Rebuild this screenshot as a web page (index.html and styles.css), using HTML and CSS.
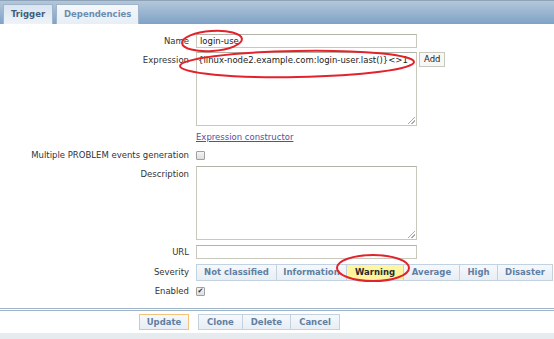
FILE: index.html
```html
<!DOCTYPE html>
<html lang="en">

<head>
    <meta charset="UTF-8">
    <title>Trigger</title>
    <link rel="stylesheet" href="styles.css">
</head>

<body>
    <div class="page">
        <div class="tab-bar">
            <a class="tab active">Trigger</a>
            <a class="tab">Dependencies</a>
        </div>

        <form class="trigger-form">
            <div class="row row-name">
                <label class="label">Name</label>
                <div class="field"><input class="text-input" type="text" value="login-use"></div>
            </div>

            <div class="row row-expression">
                <label class="label">Expression</label>
                <div class="field">
                    <div class="textarea">{linux-node2.example.com:login-user.last()}&lt;&gt;1<span class="grip"></span></div>
                    <span class="small-btn">Add</span>
                </div>
            </div>

            <div class="row row-link">
                <span class="label"></span>
                <div class="field"><a class="link">Expression constructor</a></div>
            </div>

            <div class="row row-multiple">
                <label class="label">Multiple PROBLEM events generation</label>
                <div class="field"><span class="checkbox"></span></div>
            </div>

            <div class="row row-description">
                <label class="label">Description</label>
                <div class="field"><div class="textarea"><span class="grip"></span></div></div>
            </div>

            <div class="row row-url">
                <label class="label">URL</label>
                <div class="field"><input class="text-input" type="text" value=""></div>
            </div>

            <div class="row row-severity">
                <label class="label">Severity</label>
                <div class="field severity">
                    <span class="sev sev-1">Not classified</span>
                    <span class="sev sev-2">Information</span>
                    <span class="sev sev-3 selected">Warning</span>
                    <span class="sev sev-4">Average</span>
                    <span class="sev sev-5">High</span>
                    <span class="sev sev-6">Disaster</span>
                </div>
            </div>

            <div class="row row-enabled">
                <label class="label">Enabled</label>
                <div class="field"><span class="checkbox checked">&#10004;</span></div>
            </div>
        </form>

        <div class="footer">
            <span class="btn main">Update</span>
            <div class="btn-group">
                <span class="btn">Clone</span>
                <span class="btn">Delete</span>
                <span class="btn">Cancel</span>
            </div>
        </div>
        <div class="bottom-band"></div>

        <!-- red marks drawn over the screenshot -->
        <svg class="marks" width="554" height="339" viewBox="0 0 554 339">
            <ellipse cx="212" cy="41" rx="30" ry="10" transform="rotate(-4 212 41)" />
            <ellipse cx="297" cy="64" rx="117" ry="13" transform="rotate(-1 297 64)" />
            <ellipse cx="373" cy="268" rx="36" ry="13" />
        </svg>
    </div>
</body>

</html>
```

FILE: styles.css
```css
body {
    margin: 0;
    padding: 0;
    background-color: #fff;
    font-family: "DejaVu Sans", Verdana, sans-serif;
    font-size: 8.5px;
    color: #333;
}

.page {
    position: relative;
    width: 554px;
    height: 339px;
    overflow: hidden;
}

/* tabs */
.tab-bar {
    height: 24px;
    box-sizing: border-box;
    border-top: 1px solid #8ea3b8;
    background: linear-gradient(#b4c7da, #7ea2c6);
    display: flex;
    align-items: flex-end;
    padding-left: 3px;
    gap: 3px;
}

.tab {
    height: 19px;
    line-height: 19px;
    padding: 0 7px;
    font-weight: bold;
    color: #6b8db0;
    background: linear-gradient(#f5f8fb, #e7eef5);
    border: 1px solid #9fb5cb;
    border-bottom: none;
}

.tab.active {
    width: 34px;
    color: #3f5d7c;
    background: linear-gradient(#d9e4ef, #eef3f8);
}

/* form */
.trigger-form {
    padding-top: 10px;
}

.row {
    display: flex;
    align-items: flex-start;
}

.label {
    width: 196px;
    padding-right: 7px;
    box-sizing: border-box;
    text-align: right;
    flex-shrink: 0;
}

.field {
    display: flex;
    align-items: flex-start;
    gap: 2px;
}

.text-input {
    width: 221px;
    height: 14px;
    box-sizing: border-box;
    margin: 0;
    padding: 0 3px;
    border: 1px solid #c9c8bc;
    border-top-color: #b3b2a6;
    font-family: inherit;
    font-size: 8.5px;
    color: #222;
    outline: none;
}

.textarea {
    position: relative;
    width: 221px;
    height: 74px;
    box-sizing: border-box;
    padding: 2px 1px;
    border: 1px solid #c9c8bc;
    border-top-color: #b3b2a6;
    color: #222;
    white-space: nowrap;
    overflow: hidden;
}

.grip {
    position: absolute;
    right: 1px;
    bottom: 1px;
    width: 7px;
    height: 7px;
    background: linear-gradient(135deg, transparent 45%, #aaa 45%, #aaa 55%, transparent 55%, transparent 70%, #aaa 70%, #aaa 80%, transparent 80%);
}

.small-btn {
    height: 15px;
    line-height: 13px;
    padding: 0 4px;
    box-sizing: border-box;
    border: 1px solid #c9c8bc;
    background: #f7f7f7;
    color: #222;
}

.row-name .label {
    line-height: 14px;
}

.row-expression {
    margin-top: 4px;
}

.row-expression .label {
    line-height: 16px;
}

.row-link {
    margin-top: 4px;
    height: 14px;
    line-height: 14px;
}

.link {
    color: #5a4e9c;
    text-decoration: underline;
}

.row-multiple {
    margin-top: 5px;
    line-height: 12px;
}

.checkbox {
    display: inline-block;
    width: 7px;
    height: 7px;
    margin-top: 2px;
    border: 1px solid #a0a0a0;
    border-radius: 1px;
    background: linear-gradient(#f4f4f4, #dedede);
    font-size: 7px;
    line-height: 7px;
    text-align: center;
    color: #333;
}

.row-description {
    margin-top: 5px;
}

.row-description .label {
    line-height: 16px;
}

.row-url {
    margin-top: 5px;
    line-height: 14px;
}

.row-severity {
    margin-top: 5px;
    line-height: 17px;
}

.severity {
    gap: 0;
}

.sev {
    height: 17px;
    box-sizing: border-box;
    line-height: 15px;
    text-align: center;
    font-weight: bold;
    color: #5f7fa3;
    border: 1px solid #c3d2e1;
    border-left: none;
    background: linear-gradient(#f6f8fb, #e8eef4);
}

.sev-1 { width: 81px; border-left: 1px solid #c3d2e1; }
.sev-2 { width: 70px; }
.sev-3 { width: 57px; }
.sev-4 { width: 56px; }
.sev-5 { width: 38px; }
.sev-6 { width: 55px; }

.sev.selected {
    background: #fff59e;
    color: #2b2b2b;
}

.row-enabled {
    margin-top: 4px;
    line-height: 12px;
}

/* footer buttons */
.footer {
    margin-top: 11px;
    border-top: 3px double #9fb3c8;
    height: 25px;
    box-sizing: border-box;
    display: flex;
    align-items: center;
    padding-left: 139px;
    gap: 9px;
}

.btn-group {
    display: flex;
}

.btn {
    height: 16px;
    box-sizing: border-box;
    line-height: 14px;
    padding: 0 8px;
    font-weight: bold;
    color: #5f7fa3;
    border: 1px solid #c3d2e1;
    background: linear-gradient(#f6f8fb, #e8eef4);
}

.btn-group .btn + .btn {
    border-left: none;
}

.btn.main {
    width: 50px;
    text-align: center;
    padding: 0;
    border-color: #f3c37c;
}

.bottom-band {
    height: 6px;
    background: #e6ebf0;
}

/* annotation overlay */
.marks {
    position: absolute;
    left: 0;
    top: 0;
    pointer-events: none;
}

.marks ellipse {
    fill: none;
    stroke: #e3232b;
    stroke-width: 2;
}
```
